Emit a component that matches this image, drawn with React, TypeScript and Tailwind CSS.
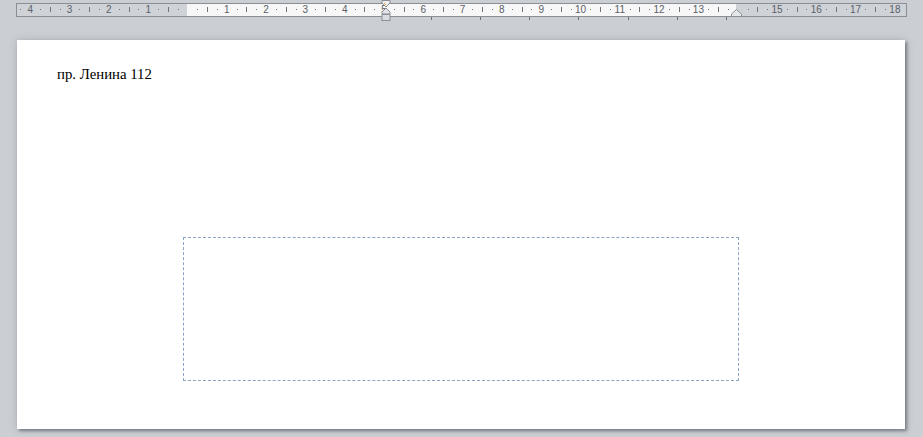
import React from "react";

const CM = 39.3;
const ZERO = 170.5; // relative to ruler inner left (x=16)

type Mark = { x: number; type: "num" | "dot" | "tick"; label?: string };

function rulerMarks(): Mark[] {
  const marks: Mark[] = [];
  for (let i = -5; i <= 18; i++) {
    const base = ZERO + i * CM;
    if (i !== 0 && i !== 14) marks.push({ x: base, type: "num", label: String(Math.abs(i)) });
    if (i < 18) {
      marks.push({ x: base + CM * 0.25, type: "dot" });
      marks.push({ x: base + CM * 0.5, type: "tick" });
      marks.push({ x: base + CM * 0.75, type: "dot" });
    }
  }
  return marks.filter((m) => m.x > 3 && m.x < 886);
}

function Ruler() {
  const marks = rulerMarks();
  return (
    <div className="relative flex h-[14px] w-[891px] border border-[#8a8f96]">
      <div className="w-[170px] bg-[#cfd2d7]" />
      <div className="w-[549px] bg-[#f7f7f7]" />
      <div className="flex-1 bg-[#cfd2d7]" />
      {marks.map((m, i) =>
        m.type === "num" ? (
          <span
            key={i}
            className="absolute top-[-1px] -translate-x-1/2 text-[10px] leading-[13px] text-[#5b6068] [font-family:'Liberation_Sans',Arial,sans-serif]"
            style={{ left: m.x }}
          >
            {m.label}
          </span>
        ) : m.type === "tick" ? (
          <span key={i} className="absolute top-[3px] h-[5px] w-px bg-[#6f747b]" style={{ left: Math.round(m.x) }} />
        ) : (
          <span key={i} className="absolute top-[5px] h-px w-px bg-[#6f747b]" style={{ left: Math.round(m.x) }} />
        )
      )}
      {/* first-line / hanging indent marker */}
      <svg className="absolute left-[364px] top-[-4px]" width="10" height="22" viewBox="0 0 10 22">
        <path d="M1 0.5 H9 V3 L5 7 L1 3 Z" fill="#eeeeee" stroke="#8a8f96" />
        <path d="M5 8 L9 12 V14 H1 V12 Z" fill="#e2e3e5" stroke="#8a8f96" />
        <rect x="1" y="14.5" width="8" height="6" fill="#dcdde0" stroke="#8a8f96" />
        <path d="M3 3 L5 5" stroke="#f0a030" />
      </svg>
      {/* right indent marker */}
      <svg className="absolute left-[714px] top-[5px]" width="11" height="8" viewBox="0 0 11 8">
        <path d="M0.5 7.5 V5 L5.5 0.5 L10.5 5 V7.5 Z" fill="#e6e7e9" stroke="#8a8f96" />
      </svg>
    </div>
  );
}

function TabStops() {
  const tabs = [431, 480, 529, 578, 628, 677, 726];
  return (
    <div className="relative h-[3px] w-full">
      {tabs.map((t) => (
        <span key={t} className="absolute top-0 h-[3px] w-px bg-[#6a6f76]" style={{ left: t }} />
      ))}
    </div>
  );
}

export default function App() {
  return (
    <div className="flex h-[437px] w-[923px] flex-col overflow-hidden bg-[#cbced3]">
      <div className="flex flex-col pt-[3px]">
        <div className="pl-[16px]">
          <Ruler />
        </div>
        <TabStops />
      </div>
      <div className="pl-[17px] pt-[20px]">
        <div className="flex h-[389px] w-[888px] flex-col bg-white shadow-[2px_2px_3px_rgba(60,70,80,0.55),0_0_8px_rgba(90,100,110,0.25)]">
          <div className="pl-[40px] pt-[25px] text-[14.8px] leading-[18px] text-black [font-family:'Liberation_Serif','Times_New_Roman',serif]">
            пр. Ленина 112
          </div>
          <div className="pl-[166px] pt-[154px]">
            <div className="h-[144px] w-[556px] border border-dashed border-[#8ea2c6]" />
          </div>
        </div>
      </div>
    </div>
  );
}
